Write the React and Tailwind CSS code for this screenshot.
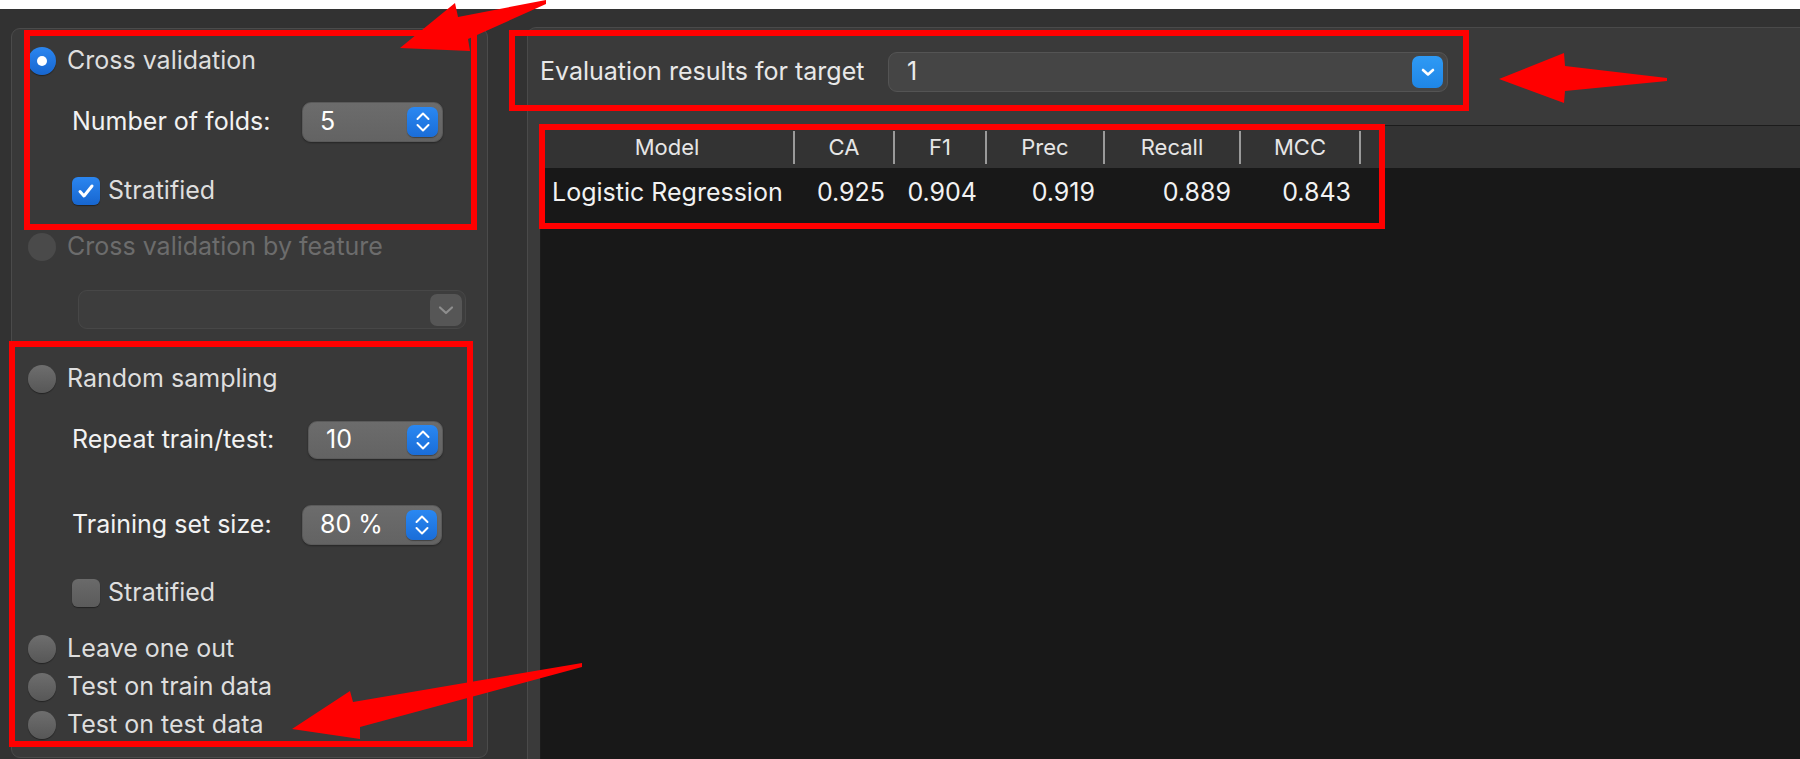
import React from "react";

function Radio({ checked, disabled }) {
  if (checked) {
    return (
      <span className="w-[28px] h-[28px] rounded-full bg-gradient-to-b from-[#2b86f0] to-[#1766d0] flex items-center justify-center shrink-0 shadow-[0_1px_1px_rgba(0,0,0,0.4)]">
        <span className="w-[10px] h-[10px] rounded-full bg-white" />
      </span>
    );
  }
  return (
    <span
      className={
        disabled
          ? "w-[28px] h-[28px] rounded-full bg-[#4a4a4a] shrink-0"
          : "w-[28px] h-[28px] rounded-full bg-gradient-to-b from-[#6e6e6e] to-[#575757] shrink-0 shadow-[0_1px_1px_rgba(0,0,0,0.4)]"
      }
    />
  );
}

function Checkbox({ checked }) {
  if (checked) {
    return (
      <span className="w-[28px] h-[28px] rounded-[6px] bg-gradient-to-b from-[#2b86f0] to-[#1766d0] flex items-center justify-center shrink-0 shadow-[0_1px_1px_rgba(0,0,0,0.4)]">
        <svg width="20" height="20" viewBox="0 0 20 20" fill="none">
          <path d="M4 10.5l4 4.5 8-10" stroke="white" strokeWidth="3" strokeLinecap="round" strokeLinejoin="round" />
        </svg>
      </span>
    );
  }
  return <span className="w-[28px] h-[28px] rounded-[6px] bg-gradient-to-b from-[#6a6a6a] to-[#5b5b5b] shrink-0 shadow-[0_1px_1px_rgba(0,0,0,0.4)]" />;
}

function Stepper() {
  return (
    <span className="w-[31px] h-[30px] rounded-[7px] bg-gradient-to-b from-[#2a88f2] to-[#1a6dd8] flex items-center justify-center shadow-[0_1px_1px_rgba(0,0,0,0.35)]">
      <svg width="18" height="24" viewBox="0 0 18 24" fill="none">
        <path d="M3.5 9L9 3.5 14.5 9" stroke="white" strokeWidth="2" strokeLinecap="round" strokeLinejoin="round" />
        <path d="M3.5 15L9 20.5 14.5 15" stroke="white" strokeWidth="2" strokeLinecap="round" strokeLinejoin="round" />
      </svg>
    </span>
  );
}

function SpinBox({ value, width, height }) {
  return (
    <div
      className="flex items-center justify-between pl-[17px] pr-[4px] rounded-[9px] bg-gradient-to-b from-[#6c6c6c] to-[#636363] border border-[#5a5a5a] shadow-[0_1px_2px_rgba(0,0,0,0.35)] text-[25px] text-white"
      style={{ width, height }}
    >
      <span>{value}</span>
      <Stepper />
    </div>
  );
}

const columns = [
  { key: "model", label: "Model", w: "w-[254px]" },
  { key: "ca", label: "CA", w: "w-[100px]" },
  { key: "f1", label: "F1", w: "w-[92px]" },
  { key: "prec", label: "Prec", w: "w-[118px]" },
  { key: "recall", label: "Recall", w: "w-[136px]" },
  { key: "mcc", label: "MCC", w: "w-[120px]" },
];

const rows = [
  { model: "Logistic Regression", ca: "0.925", f1: "0.904", prec: "0.919", recall: "0.889", mcc: "0.843" },
];

export default function App() {
  return (
    <div className="relative w-[1800px] h-[759px] overflow-hidden bg-[#323232] font-[Inter,sans-serif]">
      <div className="h-[9px] bg-white" />

      <div className="flex h-[750px]">
        {/* sampling options */}
        <div className="w-[527px] shrink-0 pl-[11px] pt-[19px]">
          <div className="w-[477px] h-[730px] border border-[#4b4b4b] rounded-[9px] bg-[#393939] flex flex-col pl-[16px] text-[25px] text-[#dedede]">
            <div className="mt-[12px] h-[40px] flex items-center">
              <Radio checked />
              <span className="ml-[11px]">Cross validation</span>
            </div>
            <div className="mt-[21px] ml-[44px] flex items-center">
              <span className="w-[230px] text-[#f2f2f2]">Number of folds:</span>
              <SpinBox value="5" width={141} height={40} />
            </div>
            <div className="mt-[35px] ml-[44px] h-[28px] flex items-center">
              <Checkbox checked />
              <span className="ml-[8px]">Stratified</span>
            </div>
            <div className="mt-[28px] h-[28px] flex items-center text-[#6c6c6c]">
              <Radio disabled />
              <span className="ml-[11px]">Cross validation by feature</span>
            </div>
            <div className="mt-[29px] ml-[50px] w-[388px] h-[39px] rounded-[9px] bg-[#3d3d3d] border border-[#474747] flex items-center justify-end pr-[3px]">
              <span className="w-[32px] h-[32px] rounded-[7px] bg-[#565656] flex items-center justify-center">
                <svg width="18" height="12" viewBox="0 0 18 12" fill="none">
                  <path d="M3 3.5l6 5.5 6-5.5" stroke="#8e8e8e" strokeWidth="2.2" strokeLinecap="round" strokeLinejoin="round" />
                </svg>
              </span>
            </div>
            <div className="mt-[36px] h-[28px] flex items-center">
              <Radio />
              <span className="ml-[11px]">Random sampling</span>
            </div>
            <div className="mt-[28px] ml-[44px] flex items-center">
              <span className="w-[236px] text-[#f2f2f2]">Repeat train/test:</span>
              <SpinBox value="10" width={135} height={38} />
            </div>
            <div className="mt-[46px] ml-[44px] flex items-center">
              <span className="w-[230px] text-[#f2f2f2]">Training set size:</span>
              <SpinBox value="80 %" width={140} height={40} />
            </div>
            <div className="mt-[34px] ml-[44px] h-[28px] flex items-center">
              <Checkbox />
              <span className="ml-[8px]">Stratified</span>
            </div>
            <div className="mt-[28px] h-[28px] flex items-center">
              <Radio />
              <span className="ml-[11px]">Leave one out</span>
            </div>
            <div className="mt-[10px] h-[28px] flex items-center">
              <Radio />
              <span className="ml-[11px]">Test on train data</span>
            </div>
            <div className="mt-[10px] h-[28px] flex items-center">
              <Radio />
              <span className="ml-[11px]">Test on test data</span>
            </div>
          </div>
        </div>

        {/* evaluation results */}
        <div className="flex-1 mt-[18px] border-t border-l border-[#4a4a4a] rounded-tl-[9px] bg-[#3a3a3a] flex flex-col pl-[12px]">
          <div className="mt-[24px] mb-[33px] h-[40px] flex items-center">
            <span className="w-[348px] text-[25px] text-[#e8e8e8]">Evaluation results for target</span>
            <div className="w-[560px] h-[40px] rounded-[9px] bg-[#454545] border border-[#545454] flex items-center justify-between pl-[18px] pr-[4px] text-[25px] text-[#ececec]">
              <span>1</span>
              <span className="w-[31px] h-[32px] rounded-[7px] bg-gradient-to-b from-[#2e9af5] to-[#1f86e6] flex items-center justify-center">
                <svg width="16" height="12" viewBox="0 0 16 12" fill="none">
                  <path d="M3 4l5 4.5 5-4.5" stroke="white" strokeWidth="2.6" strokeLinecap="round" strokeLinejoin="round" />
                </svg>
              </span>
            </div>
          </div>

          <div className="flex-1 bg-[#181818] border-t border-l border-[#1c1c1c]">
            <div className="h-[42px] bg-[#333333] flex items-center text-[22px] text-[#e6e6e6]">
              {columns.map((c) => (
                <div key={c.key} className={`${c.w} h-full flex items-center`}>
                  <span className="flex-1 text-center">{c.label}</span>
                  <span className="w-[2px] h-[33px] bg-[#9a9a9a]" />
                </div>
              ))}
            </div>
            {rows.map((r) => (
              <div key={r.model} className="h-[50px] flex items-center text-[25px] text-[#f2f2f2]">
                {columns.map((c) => (
                  <div
                    key={c.key}
                    className={c.key === "model" ? `${c.w} pl-[11px]` : `${c.w} text-right pr-[10px]`}
                  >
                    {r[c.key]}
                  </div>
                ))}
              </div>
            ))}
          </div>
        </div>
      </div>

      {/* red annotations */}
      <svg className="absolute inset-0 pointer-events-none" width="1800" height="759" viewBox="0 0 1800 759">
        <g fill="none" stroke="#ff0000" strokeWidth="6">
          <rect x="27" y="33" width="447" height="194" />
          <rect x="512" y="33" width="954" height="75" />
          <rect x="542" y="127" width="840" height="99" />
          <rect x="12" y="344" width="458" height="400" />
        </g>
        <g fill="#ff0000">
          <polygon points="400,48 455,3 458,17 546,0 546,4 468,39 470,51" />
          <polygon points="1499,79 1564,53 1565,66 1667,78 1667,81 1565,91 1564,103" />
          <polygon points="292,729 350,691 353,702 582,663 582,667 360,727 360,739" />
        </g>
      </svg>
    </div>
  );
}
